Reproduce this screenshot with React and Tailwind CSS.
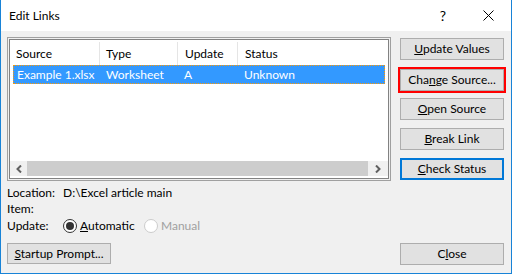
import React from 'react';

const font = { fontFamily: 'Lato, "Segoe UI", "Noto Sans", sans-serif' };

function Btn({ children, className = '', border = 'border border-[#adadad]' }) {
    return (
        <div className={`h-[22px] w-[104px] flex items-center justify-center bg-[#e1e1e1] text-[12px] text-black ${border} ${className}`}>
            {children}
        </div>
    );
}

function Radio({ checked, disabled }) {
    return (
        <div className={`w-[14px] h-[14px] rounded-full border flex items-center justify-center bg-white ${disabled ? 'border-[#cccccc]' : 'border-[#333333]'}`}>
            {checked && <div className="w-[8px] h-[8px] rounded-full bg-[#333333]" />}
        </div>
    );
}

export default function App() {
    return (
        <div className="w-[512px] h-[274px] bg-[#f0f0f0] border-x border-b border-[#1883d7] flex flex-col text-[12px] text-black" style={font}>
            <div className="h-[31px] bg-white flex items-center pl-2 pr-[17px] shrink-0">
                <span className="text-[12px] flex-1 pt-[1px]">Edit Links</span>
                <span className="text-[14px] mr-[37px]">?</span>
                <svg width="11" height="11" viewBox="0 0 11 11">
                    <path d="M0.5 0.5 L10.5 10.5 M10.5 0.5 L0.5 10.5" stroke="#000" strokeWidth="1" />
                </svg>
            </div>
            <div className="flex flex-1 pl-[6px] pt-[6px]">
                <div className="w-[384px] flex flex-col">
                    <div className="h-[144px] border border-[#a0a0a0] p-[1px]">
                        <div className="h-full border border-[#828282] bg-white flex flex-col">
                            <div className="h-[24px] mt-[1px] pt-[1px] flex items-center">
                                <div className="w-[89px] pl-[6px]">Source</div>
                                <div className="w-[78px] pl-[6px] border-l border-[#e5e5e5] h-full flex items-center">Type</div>
                                <div className="w-[60px] pl-[7px] border-l border-[#e5e5e5] h-full flex items-center">Update</div>
                                <div className="flex-1 pl-[7px] border-l border-[#e5e5e5] h-full flex items-center">Status</div>
                            </div>
                            <div className="h-[19px] mx-[3px] pt-[1px] bg-[#3399ff] text-white flex items-center outline-1 outline-dotted outline-[#ff9900] -outline-offset-1">
                                <div className="w-[86px] pl-[4px]">Example 1.xlsx</div>
                                <div className="w-[78px] pl-[7px]">Worksheet</div>
                                <div className="w-[60px] pl-[7px]">A</div>
                                <div className="flex-1 pl-[7px]">Unknown</div>
                            </div>
                            <div className="flex-1" />
                            <div className="h-[15px] mb-[2px] flex items-stretch">
                                <div className="w-[17px] bg-[#f0f0f0] flex items-center justify-center">
                                    <svg width="6" height="8" viewBox="0 0 6 8"><path d="M5 0.5 L1.5 4 L5 7.5" stroke="#606060" strokeWidth="2" fill="none" /></svg>
                                </div>
                                <div className="flex-1 bg-[#cdcdcd]" />
                                <div className="w-[20px] bg-[#f0f0f0] flex items-center justify-center">
                                    <svg width="6" height="8" viewBox="0 0 6 8"><path d="M1 0.5 L4.5 4 L1 7.5" stroke="#606060" strokeWidth="2" fill="none" /></svg>
                                </div>
                            </div>
                        </div>
                    </div>
                    <div className="flex flex-col mt-[4px] leading-[16px]">
                        <div className="flex h-[16px]"><span className="w-[56px]">Location:</span><span>D:\Excel article main</span></div>
                        <div className="flex h-[16px]"><span className="w-[56px]">Item:</span></div>
                        <div className="flex h-[18px] items-center">
                            <span className="w-[56px]">Update:</span>
                            <Radio checked />
                            <span className="ml-[3px] w-[64px]"><u>A</u>utomatic</span>
                            <Radio disabled />
                            <span className="ml-[3px] text-[#a0a0a0]">Manual</span>
                        </div>
                        <div className="h-[21px] w-[104px] mt-[8px] flex items-center justify-center bg-[#e1e1e1] border border-[#adadad]">
                            <span><u>S</u>tartup Prompt...</span>
                        </div>
                    </div>
                </div>
                <div className="ml-[9px] flex flex-col">
                    <Btn className="mt-[1px]"><span><u>U</u>pdate Values</span></Btn>
                    <div className="mt-[7px] -mx-[2px] border-2 border-[#ff0000] w-[108px] h-[26px]">
                        <Btn><span>Cha<u>n</u>ge Source...</span></Btn>
                    </div>
                    <Btn className="mt-[5px]"><span><u>O</u>pen Source</span></Btn>
                    <Btn className="mt-[8px]"><span><u>B</u>reak Link</span></Btn>
                    <Btn className="mt-[8px]" border="border-2 border-[#0078d7]"><span><u>C</u>heck Status</span></Btn>
                    <div className="flex-1" />
                    <Btn className="mb-[8px]"><span>C<u>l</u>ose</span></Btn>
                </div>
            </div>
        </div>
    );
}
